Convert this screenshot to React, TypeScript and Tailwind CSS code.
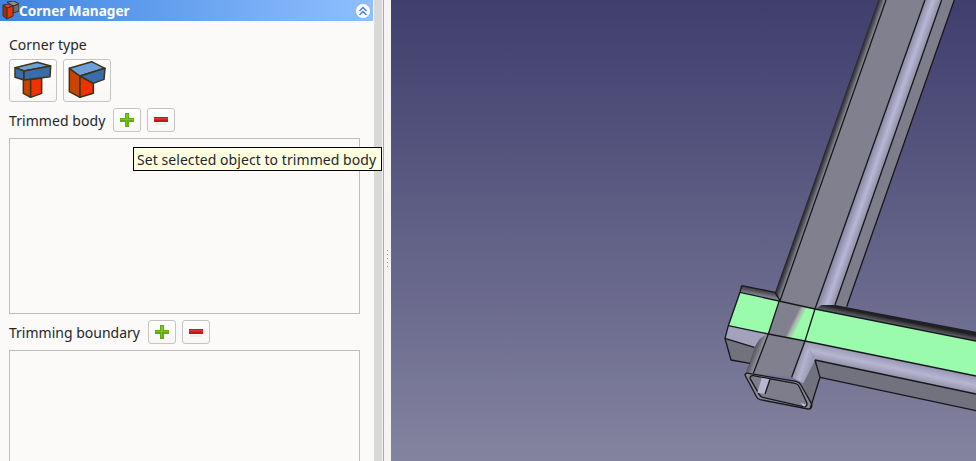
const fontClass = "font-['Noto_Sans','Open_Sans',sans-serif]";
const iconBtnClass =
  'flex h-[24px] w-[28px] items-center justify-center rounded-[3px] border border-[#c4c4c2] bg-gradient-to-b from-white to-[#f8f7f5]';
const typeBtnClass =
  'flex h-[43px] w-[48px] items-center justify-center rounded-[3px] border border-[#c4c4c2] bg-gradient-to-b from-white to-[#f8f7f5]';
const listClass = 'w-[351px] border border-[#bdbdbb] bg-[#fbfaf8]';

function AddIcon() {
  return (
    <svg width="16" height="16" viewBox="0 0 16 16">
      <path d="M6 1h4v5h5v4h-5v5H6v-5H1V6h5z" fill="#62a810" />
      <path d="M7 2h2v5h5v1H8v6H7V8H2V7h5z" fill="#7cc421" />
    </svg>
  );
}

function RemoveIcon() {
  return (
    <svg width="16" height="16" viewBox="0 0 16 16">
      <rect x="1" y="5" width="14" height="5" fill="#c4161c" />
      <rect x="1" y="6" width="14" height="1.5" fill="#e8323a" />
      <rect x="2" y="11" width="12" height="2" fill="#ececea" />
    </svg>
  );
}

function ButtJoint() {
  return (
    <svg width="46" height="41" viewBox="6 12 138 123" strokeLinejoin="round" stroke="#3d3417" strokeWidth="4.500">
      <path d="M46 70L46 112L68 124V70z" fill="#c94400" />
      <path d="M68 70L101 66V112L68 124z" fill="#f23000" />
      <path d="M21 35L88 19L128 30L48 45z" fill="#6f9fd8" />
      <path d="M21 35L48 45V72L21 64z" fill="#3a6cab" />
      <path d="M48 45L128 30L126 62L48 72z" fill="#3a6cab" />
    </svg>
  );
}

function MiterJoint() {
  return (
    <svg width="46" height="41" viewBox="168 12 138 123" strokeLinejoin="round" stroke="#3d3417" strokeWidth="4.500">
      <path d="M184 37L216 60V124L184 107z" fill="#c94400" />
      <path d="M216 60L256 82V112L216 124z" fill="#f23000" />
      <path d="M184 37L251 17L291 37L216 60z" fill="#6f9fd8" />
      <path d="M216 60L291 37L288 70L256 82z" fill="#3a6cab" />
    </svg>
  );
}

function WorkbenchIcon() {
  return (
    <svg width="17" height="19" viewBox="0 0 17 19" strokeLinejoin="round">
      <path d="M5 1l7-1 5 3-6 2z" fill="#8a8d92" stroke="#35302a" strokeWidth="1" />
      <path d="M11 5l6-2v7l-6 2z" fill="#6a6d70" stroke="#35302a" strokeWidth="1" />
      <path d="M1 4l6-1 4 2-6 2z" fill="#ef3a4a" stroke="#35302a" strokeWidth="1" />
      <path d="M1 4l4 3v11l-4-3z" fill="#a83000" stroke="#35302a" strokeWidth="1" />
      <path d="M5 7l6-2v10l-6 3z" fill="#e83400" stroke="#35302a" strokeWidth="1" />
    </svg>
  );
}

// the 3D view, drawn at 3x in a local space so the coordinates stay whole numbers
function FrameModel() {
  return (
    <svg className="h-full w-full" viewBox="0 0 585 461">
      <defs>
        <linearGradient id="stripUp" gradientUnits="userSpaceOnUse" x1="535" y1="-780" x2="555.500" y2="-772.800">
          <stop offset="0" stopColor="#26262b" />
          <stop offset="0.5" stopColor="#5a5a64" />
          <stop offset="1" stopColor="#9c9ca8" />
        </linearGradient>
        <linearGradient id="bandUp" gradientUnits="userSpaceOnUse" x1="675" y1="-780" x2="719.600" y2="-764.400">
          <stop offset="0" stopColor="#8c8ca6" />
          <stop offset="0.5" stopColor="#b8b8d6" />
          <stop offset="1" stopColor="#8e8ea6" />
        </linearGradient>
        <linearGradient id="stripRight" gradientUnits="userSpaceOnUse" x1="600" y1="180" x2="594.700" y2="206.500">
          <stop offset="0" stopColor="#202024" />
          <stop offset="0.5" stopColor="#5a5a62" />
          <stop offset="1" stopColor="#a4a4b0" />
        </linearGradient>
        <linearGradient id="stripLeft" gradientUnits="userSpaceOnUse" x1="180" y1="80" x2="175" y2="108">
          <stop offset="0" stopColor="#202024" />
          <stop offset="0.6" stopColor="#5a5a62" />
          <stop offset="1" stopColor="#8a8a96" />
        </linearGradient>
        <linearGradient id="bandRight" gradientUnits="userSpaceOnUse" x1="600" y1="300" x2="588.600" y2="353.800">
          <stop offset="0" stopColor="#9696b4" />
          <stop offset="0.5" stopColor="#b6b6d2" />
          <stop offset="1" stopColor="#8e8ea6" />
        </linearGradient>
        <linearGradient id="bandFront" gradientUnits="userSpaceOnUse" x1="290" y1="300" x2="335" y2="315">
          <stop offset="0" stopColor="#8c8ca6" />
          <stop offset="0.5" stopColor="#b4b4d0" />
          <stop offset="1" stopColor="#9a9ab2" />
        </linearGradient>
        <linearGradient id="shadeFront" gradientUnits="userSpaceOnUse" x1="145" y1="285" x2="180" y2="298">
          <stop offset="0" stopColor="#3a3a42" />
          <stop offset="0.5" stopColor="#6a6a74" />
          <stop offset="1" stopColor="#a4a4b4" />
        </linearGradient>
        <linearGradient id="greenFade" gradientUnits="userSpaceOnUse" x1="280" y1="180" x2="300" y2="190">
          <stop offset="0" stopColor="#80808f" />
          <stop offset="0.35" stopColor="#a8b0a8" />
          <stop offset="1" stopColor="#9bfbad" />
        </linearGradient>
      </defs>
      <g transform="translate(309 260) scale(0.3333)" strokeLinejoin="round">
        {/* upright tube */}
        <path d="M535 -780L558 -780L240 122L225 97z" fill="url(#stripUp)" />
        <path d="M558 -780L675 -780L345 147L240 122z" fill="#80808f" />
        <path d="M675 -780L725 -780L405 135L345 147z" fill="url(#bandUp)" />
        <path d="M725 -780L763 -780L440 140L405 135z" fill="#7d7d8b" />

        {/* lower faces of both horizontal pieces */}
        <path d="M75 235L165 258L150 310L93 300z" fill="#72727e" />
        <path d="M345 300L828 402V452L360 352z" fill="#72727e" />
        <path d="M345 300L360 352L330 448L310 370z" fill="#72727e" />

        {/* horizontal tube */}
        <path d="M125 77L225 97L238 122L120 97z" fill="url(#stripLeft)" />
        <path d="M120 97L238 122L205 222L85 197z" fill="#9bfbad" />
        <path d="M85 197L205 222L178 238L163 262L75 235z" fill="#a2a2bc" />
        <path d="M345 147L365 135L405 135L828 215V243z" fill="url(#stripRight)" />
        <path d="M345 147L828 243V348L315 243z" fill="#9bfbad" />
        <path d="M315 243L828 348V402L345 300z" fill="url(#bandRight)" />

        {/* short stub through the middle */}
        <path d="M238 122L345 147L315 243L205 222z" fill="url(#greenFade)" />
        <path d="M205 222L315 243L275 352L160 340z" fill="#80808f" />
        <path d="M205 222C185 228 172 245 165 262L135 345L160 340z" fill="url(#shadeFront)" />
        <path d="M315 243L345 300L310 370L275 352z" fill="url(#bandFront)" />

        {/* tube mouth */}
        <path d="M135 345C136 340 141 339 146 340L288 364C296 366 300 369 303 375L334 430C337 438 335 448 325 447L180 419C175 418 172 415 170 411z" fill="#8b8b97" stroke="#18181c" strokeWidth="4" />
        <path d="M150 355C150 349 154 346 160 347L285 370C291 371 295 374 297 379L320 427C323 436 318 441 310 440L188 412C183 411 180 408 178 404z" fill="#7d7d8b" stroke="#18181c" strokeWidth="4" />
        <path d="M185 354L210 358L195 402L172 398z" fill="#b6b6d0" />
        <path d="M210 358L195 402" fill="none" stroke="#18181c" strokeWidth="4" />
        <path d="M302 428L318 434L312 440z" fill="#c8c8d8" />

        {/* edges */}
        <g fill="none" stroke="#18181c" strokeWidth="4">
          <path d="M558 -780L240 122" />
          <path d="M675 -780L345 147" />
          <path d="M725 -780L405 135" />
          <path d="M763 -780L440 140" />
          <path d="M125 77L225 97L240 122" />
          <path d="M120 97L345 147L828 243" />
          <path d="M85 197L205 222L315 243L828 348" />
          <path d="M345 300L828 402" />
          <path d="M360 352L828 452" />
          <path d="M345 300L360 352L330 448" />
          <path d="M238 122L205 222L160 340" />
          <path d="M345 147L315 243L275 352" />
          <path d="M125 77L120 97L85 197L75 235L93 300L150 310" />
          <path d="M75 235L163 262" />
        </g>
      </g>
    </svg>
  );
}

export default function App() {
  return (
    <div className={`relative flex h-[461px] w-[976px] overflow-hidden bg-[#fbfaf8] text-[14px] text-[#26262a] ${fontClass}`}>
      <div className="flex w-[374px] flex-col overflow-hidden">
        <div className="flex h-[21px] w-[373px] shrink-0 items-center bg-gradient-to-r from-[#3f84df] to-[#8fc0ff] pr-[3px]">
          <span className="ml-[2px] h-[19px] w-[17px] shrink-0">
            <WorkbenchIcon />
          </span>
          <span className="flex-1 text-[13.6px] leading-[19px] font-bold text-white">Corner Manager</span>
          <span className="flex h-[14px] w-[14px] items-center justify-center rounded-full bg-white">
            <svg width="10" height="10" viewBox="0 0 10 10" fill="none" stroke="#3f84df" strokeWidth="1.5">
              <path d="M1.500 5L5 1.500 8.500 5M1.500 9L5 5.500 8.500 9" />
            </svg>
          </span>
        </div>

        <div className="flex flex-col pl-[9px]">
          <div className="mt-[14px] leading-[20px]">Corner type</div>
          <div className="mt-[4px] flex gap-[6px]">
            <button className={typeBtnClass}>
              <ButtJoint />
            </button>
            <button className={typeBtnClass}>
              <MiterJoint />
            </button>
          </div>

          <div className="mt-[6px] flex h-[24px] items-center">
            <span className="w-[104px] tracking-[0.06px]">Trimmed body</span>
            <div className="flex gap-[6px]">
              <button className={iconBtnClass}>
                <AddIcon />
              </button>
              <button className={iconBtnClass}>
                <RemoveIcon />
              </button>
            </div>
          </div>
          <div className={`mt-[6px] h-[176px] ${listClass}`} />

          <div className="mt-[6px] flex h-[24px] items-center">
            <span className="w-[139px]">Trimming boundary</span>
            <div className="flex gap-[6px]">
              <button className={iconBtnClass}>
                <AddIcon />
              </button>
              <button className={iconBtnClass}>
                <RemoveIcon />
              </button>
            </div>
          </div>
          <div className={`mt-[6px] h-[140px] ${listClass}`} />
        </div>
      </div>

      <div className="w-[8px] shrink-0 bg-[#d9d9d7]" />
      <div className="w-[1px] shrink-0 bg-[#f3f3f1]" />
      <div className="w-[1px] shrink-0 bg-[#a9a9a7]" />
      <div className="flex w-[7px] shrink-0 flex-col items-center justify-center gap-[3px] bg-[#f5f4f2] pt-[56px]">
        {[0, 1, 2, 3, 4].map((i) => (
          <span key={i} className="h-[1px] w-[1px] bg-[#9a9a98]" />
        ))}
      </div>

      <div className="flex-1 bg-gradient-to-b from-[#403e6d] to-[#84839f]">
        <FrameModel />
      </div>

      <div className="absolute top-[147px] left-[133px] flex h-[24px] w-[249px] items-center border border-black bg-[#ffffe1] pl-[3px] text-[14px] tracking-[0.06px] text-[#26262a]">
        Set selected object to trimmed body
      </div>
    </div>
  );
}
